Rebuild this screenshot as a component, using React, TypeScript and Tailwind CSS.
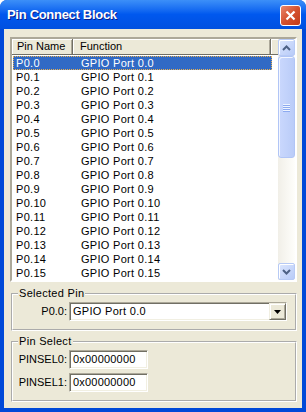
import React from "react";

const ROWS = Array.from({ length: 16 }, (_, i) => ({
  pin: `P0.${i}`,
  fn: `GPIO Port 0.${i}`,
}));

const SUNKEN =
  "border border-t-[#ACA899] border-l-[#ACA899] border-r-white border-b-white shadow-[inset_1px_1px_0_#716F64,inset_-1px_-1px_0_#F1EFE2]";

function ScrollArrow({ down }: { down?: boolean }) {
  return (
    <div className="h-[17px] w-[17px] rounded-[2px] border border-[#B7CAF5] bg-gradient-to-br from-[#DCE6FD] to-[#B8CBF8] shadow-[inset_1px_1px_0_#FFFFFF] flex items-center justify-center">
      <svg width="9" height="6" viewBox="0 0 9 6">
        <polyline
          points={down ? "1,1 4.5,4.5 8,1" : "1,5 4.5,1.5 8,5"}
          fill="none"
          stroke="#4D6185"
          strokeWidth="2"
        />
      </svg>
    </div>
  );
}

function Scrollbar() {
  return (
    <div className="w-[17px] flex flex-col bg-gradient-to-r from-[#F1EFE8] to-[#FEFEFB]">
      <ScrollArrow />
      <div className="flex-1 flex flex-col">
        <div className="h-[102px] rounded-[3px] border border-[#B1C5F6] bg-gradient-to-r from-[#CAD8FD] to-[#BACCF8] shadow-[inset_1px_1px_0_#F2F6FF] flex flex-col items-center justify-center gap-[1px]">
          {[0, 1, 2, 3].map((i) => (
            <div key={i} className="h-[1px] w-[7px] bg-[#EEF4FF] shadow-[0_1px_0_#8DAAF0]" />
          ))}
        </div>
      </div>
      <ScrollArrow down />
    </div>
  );
}

function Field({ label, value }: { label: string; value: string }) {
  return (
    <div className="flex items-center">
      <span className="w-[54px] text-right">{label}</span>
      <div className={`ml-[2px] h-[19px] w-[79px] bg-white flex items-center pl-[3px] tracking-[0.2px] ${SUNKEN}`}>
        {value}
      </div>
    </div>
  );
}

export default function App() {
  return (
    <div className="w-[306px] h-[412px] flex flex-col rounded-t-[7px] overflow-hidden bg-[#0049D8] text-[11px] text-black font-['Liberation_Sans',Arial,sans-serif] select-none">
      {/* title bar */}
      <div className="h-[29px] shrink-0 flex items-center pl-[7px] pr-[5px] bg-gradient-to-b from-[#3C8FF8] via-[#0058EE] to-[#0050E0]">
        <span className="flex-1 text-white font-bold text-[13px] tracking-[-0.3px] mt-[1px] [text-shadow:1px_1px_0_#0A1E8C]">
          Pin Connect Block
        </span>
        <div className="mt-[2px] h-[21px] w-[21px] rounded-[3px] border border-white bg-gradient-to-br from-[#E9866A] via-[#D4512E] to-[#C23A18] flex items-center justify-center">
          <svg width="11" height="11" viewBox="0 0 11 11">
            <path d="M1.5 1.5 L9.5 9.5 M9.5 1.5 L1.5 9.5" stroke="white" strokeWidth="2.2" />
          </svg>
        </div>
      </div>

      {/* client */}
      <div className="flex-1 mx-[4px] mb-[4px] bg-[#ECE9D8] flex flex-col pt-[8px]">
        {/* list view */}
        <div className="ml-[6px] w-[287px] h-[245px] flex border-2 border-t-[#ACA899] border-l-[#ACA899] border-r-white border-b-white overflow-hidden bg-white">
          <div className="flex-1 flex flex-col overflow-hidden">
            <div className="h-[16px] shrink-0 flex bg-[#ECE9D8] border-b border-[#716F64]">
              <div className="w-[61px] pl-[5px] flex items-center border-r border-[#716F64] shadow-[inset_1px_1px_0_white,inset_-1px_0_0_#ACA899]">
                Pin Name
              </div>
              <div className="w-[198px] pl-[7px] flex items-center border-r border-[#716F64] shadow-[inset_1px_1px_0_white,inset_-1px_0_0_#ACA899]">
                Function
              </div>
              <div className="flex-1 shadow-[inset_1px_1px_0_white]" />
            </div>
            <div className="pt-[1px] tracking-[0.3px]">
              {ROWS.map((r, i) => (
                <div
                  key={r.pin}
                  className={`h-[14px] w-[259px] ml-[1px] flex items-center ${
                    i === 0
                      ? "bg-[#316AC5] text-white outline-1 outline-dotted outline-offset-[-1px] outline-[#E8B050]"
                      : ""
                  }`}
                >
                  <span className="w-[60px] pl-[3px]">{r.pin}</span>
                  <span className="pl-[8px]">{r.fn}</span>
                </div>
              ))}
            </div>
          </div>
          <Scrollbar />
        </div>

        {/* selected pin */}
        <fieldset className="mt-[5px] ml-[7px] w-[286px] border-2 border-white [border-style:groove] px-0 pt-[2px] pb-[8px]">
          <legend className="ml-[5px] px-[1px] leading-[13px] tracking-[0.3px]">Selected Pin</legend>
          <div className="flex items-center">
            <span className="w-[54px] text-right">P0.0:</span>
            <div className={`ml-[2px] h-[19px] w-[218px] bg-white flex items-center ${SUNKEN}`}>
              <span className="flex-1 pl-[3px] tracking-[0.3px]">GPIO Port 0.0</span>
              <div className="h-[17px] w-[17px] bg-[#ECE9D8] border border-t-[#F1EFE2] border-l-[#F1EFE2] border-r-[#716F64] border-b-[#716F64] shadow-[inset_1px_1px_0_white,inset_-1px_-1px_0_#ACA899] flex items-center justify-center">
                <svg width="7" height="4" viewBox="0 0 7 4">
                  <path d="M0 0 H7 L3.5 4 Z" fill="black" />
                </svg>
              </div>
            </div>
          </div>
        </fieldset>

        {/* pin select */}
        <fieldset className="mt-[4px] ml-[7px] w-[286px] border-2 border-white [border-style:groove] px-0 pt-[2px] pb-[8px]">
          <legend className="ml-[5px] px-[1px] leading-[13px] tracking-[0.3px]">Pin Select</legend>
          <div className="flex flex-col gap-[4px]">
            <Field label="PINSEL0:" value="0x00000000" />
            <Field label="PINSEL1:" value="0x00000000" />
          </div>
        </fieldset>
      </div>
    </div>
  );
}
